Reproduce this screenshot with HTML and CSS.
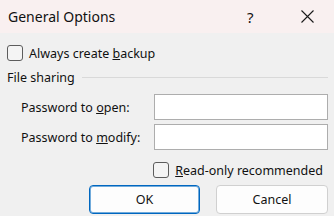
FILE: index.html
```html
<!DOCTYPE html>
<html lang="en">
<head>
<meta charset="utf-8">
<title>General Options</title>
<link rel="stylesheet" href="styles.css">
</head>
<body>
<div class="dialog">
  <header class="titlebar">
    <span class="title">General Options</span>
    <span class="help">?</span>
    <span class="close">
      <svg width="13" height="13" viewBox="0 0 13 13"><path d="M0.5 0.5 L12.5 12.5 M12.5 0.5 L0.5 12.5" stroke="#1a1a1a" stroke-width="1.1" fill="none"/></svg>
    </span>
  </header>
  <main class="content">
    <label class="check backup"><span class="box"></span><span class="check-text">Always create <u>b</u>ackup</span></label>
    <div class="group-head"><span class="group-title">File sharing</span><span class="rule"></span></div>
    <div class="field"><span class="field-label">Password to <u>o</u>pen:</span><span class="input"></span></div>
    <div class="field second"><span class="field-label">Password to <u>m</u>odify:</span><span class="input"></span></div>
    <div class="ro-row"><label class="check"><span class="box"></span><span class="check-text"><u>R</u>ead-only recommended</span></label></div>
    <div class="buttons"><span class="btn primary">OK</span><span class="btn">Cancel</span></div>
  </main>
</div>
</body>
</html>
```

FILE: styles.css
```css
* { box-sizing: border-box; }
html, body { margin: 0; padding: 0; }
body {
  width: 334px;
  height: 216px;
  overflow: hidden;
  background: #f0f0f0;
  font-family: "Noto Sans", "DejaVu Sans", sans-serif;
  color: #111;
}
.dialog { width: 334px; height: 216px; display: flex; flex-direction: column; }
.titlebar {
  height: 33px;
  flex: none;
  background: #f9f0f0;
  display: flex;
  align-items: center;
}
.title { font-size: 14px; padding-left: 8px; flex: 1; }
.help { font-size: 15px; width: 8px; margin-right: 46px; }
.close { width: 13px; height: 13px; margin-right: 20px; display: flex; }
.content {
  padding: 12px 6px 0 7px;
  display: flex;
  flex-direction: column;
  font-size: 12.5px;
}
.check { display: flex; align-items: center; height: 16px; }
.box {
  width: 16px; height: 16px;
  border: 1px solid #5c5c5c;
  border-radius: 3px;
  background: #f4f4f4;
  flex: none;
}
.check-text { margin-left: 6px; }
.group-head { display: flex; align-items: center; margin-top: 8px; height: 16px; }
.rule { flex: 1; height: 1px; background: #d9d9d9; margin-left: 7px; }
.field { display: flex; align-items: center; margin-top: 9px; padding-left: 14px; }
.field.second { margin-top: 4px; }
.field-label { width: 133px; }
.input {
  width: 174px; height: 26px;
  background: #fff;
  border: 1px solid #adadad;
}
.ro-row { display: flex; justify-content: flex-end; margin-top: 12px; padding-right: 5px; }
.ro-row .check-text { margin-left: 6px; }
.buttons { display: flex; justify-content: flex-end; gap: 16px; margin-top: 7px; }
.btn {
  width: 112px; height: 29px;
  display: flex; align-items: center; justify-content: center;
  background: #fdfdfd;
  border: 1px solid #d0d0d0;
  border-radius: 4px;
  font-size: 12.5px;
}
.btn.primary {
  width: 111px;
  border: 1px solid #0067c0;
  box-shadow: inset 0 0 0 1px rgba(0, 103, 192, 0.55);
}
```
